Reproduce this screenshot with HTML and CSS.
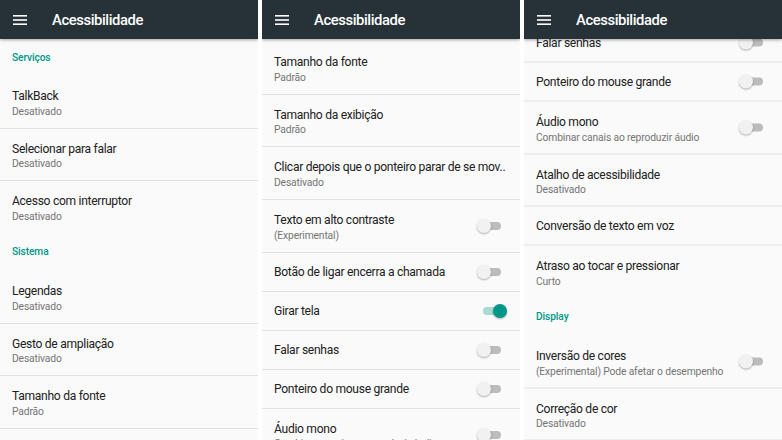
FILE: index.html
```html
<!DOCTYPE html>
<html lang="pt-BR">
<head>
  <meta charset="utf-8">
  <title>Acessibilidade</title>
  <link rel="stylesheet" href="styles.css">
</head>
<body>
  <div class="screens">

    <!-- tela 1 -->
    <section class="screen">
      <header class="appbar">
        <svg class="menu" width="14" height="10" viewBox="0 0 14 10"><rect y="0" width="14" height="1.6"/><rect y="4.2" width="14" height="1.6"/><rect y="8.4" width="14" height="1.6"/></svg>
        <h1>Acessibilidade</h1>
      </header>
      <div class="list">
        <div class="category first">Serviços</div>
        <div class="pref two"><div class="text"><div class="title">TalkBack</div><div class="summary">Desativado</div></div></div>
        <div class="pref two"><div class="text"><div class="title">Selecionar para falar</div><div class="summary">Desativado</div></div></div>
        <div class="pref two no-line"><div class="text"><div class="title">Acesso com interruptor</div><div class="summary">Desativado</div></div></div>
        <div class="category">Sistema</div>
        <div class="pref two"><div class="text"><div class="title">Legendas</div><div class="summary">Desativado</div></div></div>
        <div class="pref two"><div class="text"><div class="title">Gesto de ampliação</div><div class="summary">Desativado</div></div></div>
        <div class="pref two"><div class="text"><div class="title">Tamanho da fonte</div><div class="summary">Padrão</div></div></div>
      </div>
    </section>

    <!-- tela 2 -->
    <section class="screen">
      <header class="appbar">
        <svg class="menu" width="14" height="10" viewBox="0 0 14 10"><rect y="0" width="14" height="1.6"/><rect y="4.2" width="14" height="1.6"/><rect y="8.4" width="14" height="1.6"/></svg>
        <h1>Acessibilidade</h1>
      </header>
      <div class="list gap-top">
        <div class="pref two"><div class="text"><div class="title">Tamanho da fonte</div><div class="summary">Padrão</div></div></div>
        <div class="pref two"><div class="text"><div class="title">Tamanho da exibição</div><div class="summary">Padrão</div></div></div>
        <div class="pref two"><div class="text"><div class="title">Clicar depois que o ponteiro parar de se mov..</div><div class="summary">Desativado</div></div></div>
        <div class="pref two"><div class="text"><div class="title">Texto em alto contraste</div><div class="summary">(Experimental)</div></div><span class="switch"></span></div>
        <div class="pref one"><div class="text"><div class="title">Botão de ligar encerra a chamada</div></div><span class="switch"></span></div>
        <div class="pref one"><div class="text"><div class="title">Girar tela</div></div><span class="switch on"></span></div>
        <div class="pref one"><div class="text"><div class="title">Falar senhas</div></div><span class="switch"></span></div>
        <div class="pref one"><div class="text"><div class="title">Ponteiro do mouse grande</div></div><span class="switch"></span></div>
        <div class="pref two"><div class="text"><div class="title">Áudio mono</div><div class="summary">Combinar canais ao reproduzir áudio</div></div><span class="switch"></span></div>
      </div>
    </section>

    <!-- tela 3, rolada um pouco para baixo -->
    <section class="screen">
      <header class="appbar">
        <svg class="menu" width="14" height="10" viewBox="0 0 14 10"><rect y="0" width="14" height="1.6"/><rect y="4.2" width="14" height="1.6"/><rect y="8.4" width="14" height="1.6"/></svg>
        <h1>Acessibilidade</h1>
      </header>
      <div class="list scrolled">
        <div class="pref one"><div class="text"><div class="title">Falar senhas</div></div><span class="switch"></span></div>
        <div class="pref one"><div class="text"><div class="title">Ponteiro do mouse grande</div></div><span class="switch"></span></div>
        <div class="pref two"><div class="text"><div class="title">Áudio mono</div><div class="summary">Combinar canais ao reproduzir áudio</div></div><span class="switch"></span></div>
        <div class="pref two"><div class="text"><div class="title">Atalho de acessibilidade</div><div class="summary">Desativado</div></div></div>
        <div class="pref one"><div class="text"><div class="title">Conversão de texto em voz</div></div></div>
        <div class="pref two no-line"><div class="text"><div class="title">Atraso ao tocar e pressionar</div><div class="summary">Curto</div></div></div>
        <div class="category">Display</div>
        <div class="pref two"><div class="text"><div class="title">Inversão de cores</div><div class="summary">(Experimental) Pode afetar o desempenho</div></div><span class="switch"></span></div>
        <div class="pref two"><div class="text"><div class="title">Correção de cor</div><div class="summary">Desativado</div></div></div>
      </div>
    </section>

  </div>
</body>
</html>
```

FILE: styles.css
```css
html, body {
  margin: 0;
  padding: 0;
  height: 100%;
  overflow: hidden;
  background: #fff;
}
body {
  font-family: Roboto, "Noto Sans", "Liberation Sans", sans-serif;
}
.screens {
  display: flex;
  gap: 4px;
  height: 440px;
}
.screen {
  width: 258px;
  flex: none;
  display: flex;
  flex-direction: column;
  overflow: hidden;
  background: #fafafa;
}
.appbar {
  position: relative;
  z-index: 2;
  flex: none;
  height: 39px;
  display: flex;
  align-items: center;
  background: #263238;
  box-shadow: 0 1px 3px rgba(0, 0, 0, .35);
}
.menu {
  margin-left: 13px;
  fill: #fff;
}
.appbar h1 {
  margin: 0 0 0 25px;
  font-size: 14.8px;
  font-weight: 500;
  letter-spacing: -.4px;
  color: #fff;
}
.list {
  flex: 1;
}
.gap-top {
  padding-top: 3px;
}
.scrolled {
  transform: translateY(-15.5px);
}
.category {
  height: 37px;
  box-sizing: border-box;
  padding: 12px 12px 0;
  font-size: 10.2px;
  font-weight: 500;
  letter-spacing: -.1px;
  color: #009688;
}
.category.first {
  padding-top: 13px;
}
.pref {
  display: flex;
  align-items: center;
  box-sizing: border-box;
  padding: 0 12px;
  border-bottom: 1px solid #e2e2e2;
}
.pref.no-line {
  border-bottom-color: transparent;
}
.pref.two {
  height: 52.7px;
  align-items: flex-start;
  padding-top: 12px;
}
.pref.one {
  height: 39px;
}
.text {
  flex: 1;
  min-width: 0;
}
.title {
  font-size: 12.1px;
  line-height: 16px;
  letter-spacing: -.3px;
  color: #212121;
  white-space: nowrap;
}
.summary {
  margin-top: 1.5px;
  font-size: 10.3px;
  line-height: 12px;
  letter-spacing: -.15px;
  color: #757575;
  white-space: nowrap;
}
.switch {
  position: relative;
  flex: none;
  width: 30px;
  height: 14px;
  margin-right: 1px;
}
.pref.two .switch {
  margin-top: 7px;
}
.switch::before {
  content: '';
  position: absolute;
  left: 6px;
  top: 3px;
  width: 18px;
  height: 8px;
  border-radius: 4px;
  background: #bcbcbc;
}
.switch::after {
  content: '';
  position: absolute;
  left: 0;
  top: 0;
  width: 14px;
  height: 14px;
  border-radius: 50%;
  background: #f1f1f1;
  box-shadow: 0 1px 2px rgba(0, 0, 0, .3);
}
.switch.on::before {
  background: #a9d9d3;
}
.switch.on::after {
  left: 16px;
  background: #009688;
}
```
